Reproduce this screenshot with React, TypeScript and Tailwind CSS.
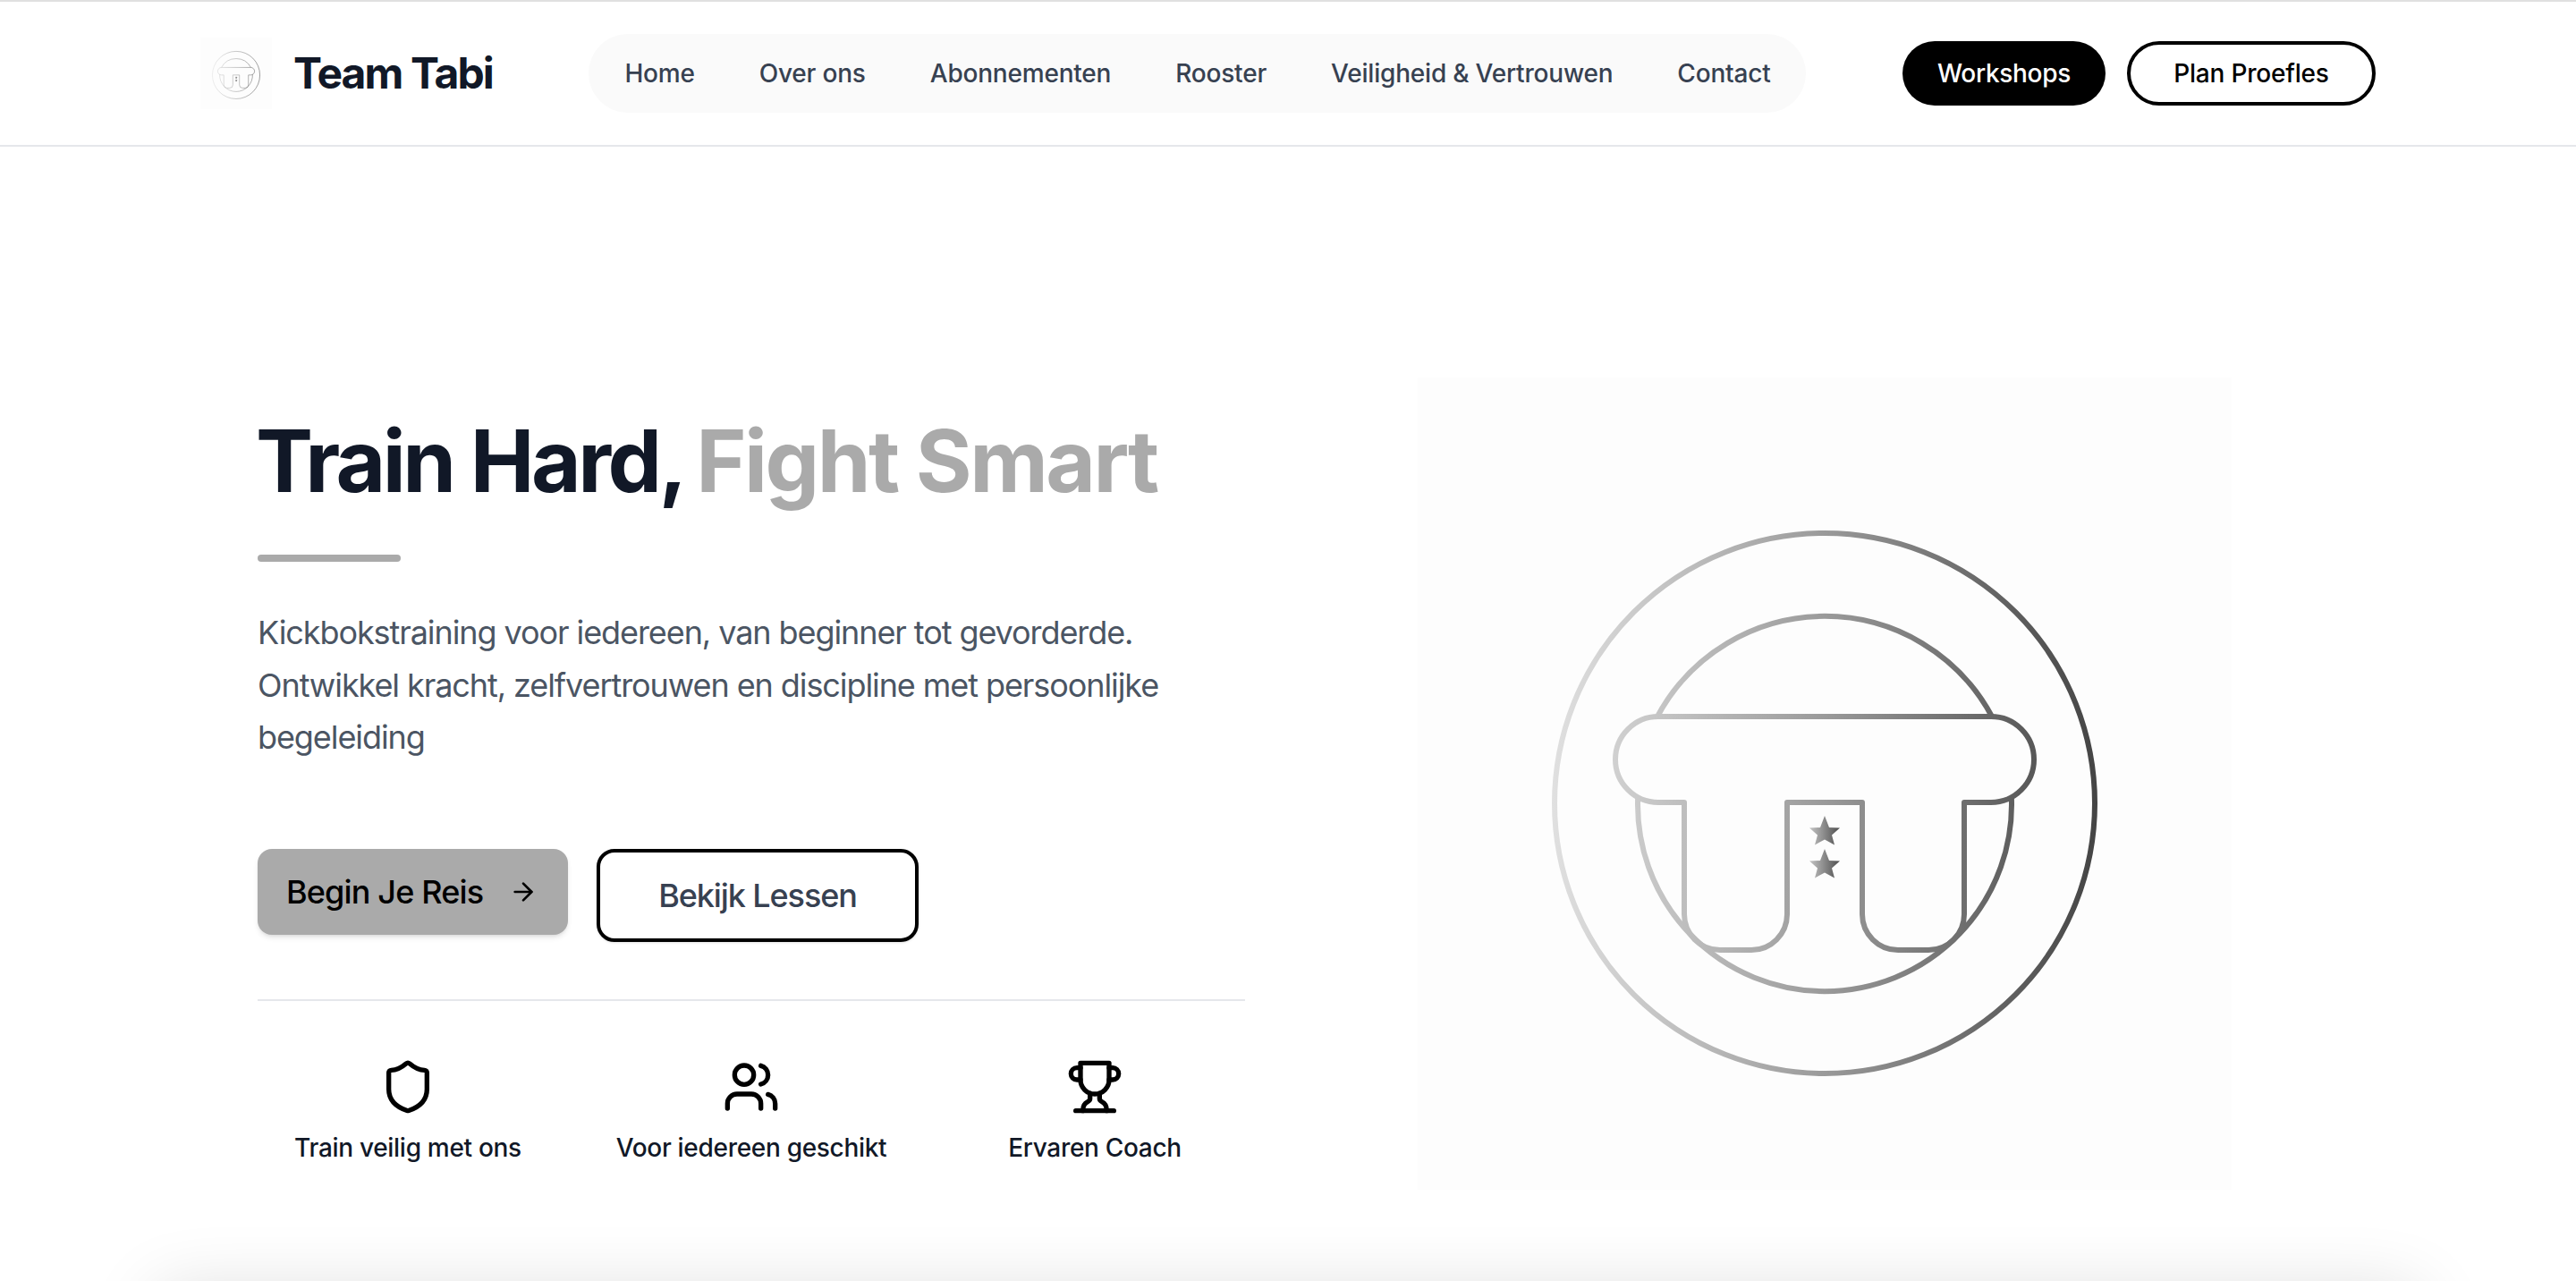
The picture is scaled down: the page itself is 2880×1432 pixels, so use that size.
import { ArrowRight, Shield, Users } from "lucide-react";
import React from "react";

const navLinks = ["Home", "Over ons", "Abonnementen", "Rooster", "Veiligheid & Vertrouwen", "Contact"];

const Logo = ({ id, className }: { id: string; className: string }) => (
  <svg viewBox="0 0 910 908" className={className} fill="none">
    <defs>
      <linearGradient id={id} gradientUnits="userSpaceOnUse" x1="150" y1="0" x2="760" y2="0">
        <stop offset="0" stopColor="#e0e0e0" />
        <stop offset="0.5" stopColor="#9a9a9a" />
        <stop offset="1" stopColor="#444444" />
      </linearGradient>
      <linearGradient id={`${id}-star`} x1="0" y1="0" x2="1" y2="0">
        <stop offset="0" stopColor="#c4c4c4" />
        <stop offset="1" stopColor="#4d4d4d" />
      </linearGradient>
    </defs>
    <g stroke={`url(#${id})`} strokeWidth="6" strokeLinejoin="round">
      <circle cx="455" cy="476" r="302" />
      <path d="M268 379A212 212 0 0 1 642 379" />
      <path d="M246.2 468A209 209 0 1 0 663.8 468" />
      <path d="M269 379H641A48 48 0 0 1 641 475H611V600A40 40 0 0 1 571 640H537A40 40 0 0 1 497 600V475H413V600A40 40 0 0 1 373 640H338A40 40 0 0 1 298 600V475H269A48 48 0 0 1 269 379Z" />
    </g>
    <path
      fill={`url(#${id}-star)`}
      d="M455 490L460 503L472 503.5L463 511.5L466 522.5L455 516.5L444 522.5L447 511.5L438 503.5L450 503Z"
    />
    <path
      fill={`url(#${id}-star)`}
      d="M455 527L460 540L472 540.5L463 548.5L466 559.5L455 553.5L444 559.5L447 548.5L438 540.5L450 540Z"
    />
  </svg>
);

// lucide's Trophy changed its shape, the picture has the older cup
const Trophy = ({ className }: { className?: string }) => (
  <svg
    viewBox="0 0 24 24"
    className={className}
    fill="none"
    stroke="currentColor"
    strokeWidth="2"
    strokeLinecap="round"
    strokeLinejoin="round"
  >
    <path d="M6 9H4.5a2.5 2.5 0 0 1 0-5H6" />
    <path d="M18 9h1.5a2.5 2.5 0 0 0 0-5H18" />
    <path d="M4 22h16" />
    <path d="M10 14.66V17c0 .55-.47.98-.97 1.21C7.85 18.75 7 20.24 7 22" />
    <path d="M14 14.66V17c0 .55.47.98.97 1.21C16.15 18.75 17 20.24 17 22" />
    <path d="M18 2H6v7a6 6 0 0 0 12 0V2Z" />
  </svg>
);

const features = [
  { icon: Shield, label: "Train veilig met ons" },
  { icon: Users, label: "Voor iedereen geschikt" },
  { icon: Trophy, label: "Ervaren Coach" },
];

export default function App() {
  return (
    <div className="h-screen overflow-hidden bg-white font-['Inter',sans-serif]">
      <header className="flex h-[164px] items-center justify-between border-t-2 border-b-2 border-t-[#e0e0e0] border-b-[#e5e7eb] px-[224px]">
        <a className="flex items-center gap-6">
          <Logo id="logo-small" className="size-20 bg-[#fdfdfd]" />
          <span className="text-[48px] font-bold tracking-[-1.9px] text-[#111827]">Team Tabi</span>
        </a>
        <nav className="flex h-[88px] items-center gap-[72px] rounded-full bg-[#fafafa] px-10">
          {navLinks.map((link) => (
            <a key={link} className="text-[28px] font-medium tracking-[-0.2px] text-[#374151]">
              {link}
            </a>
          ))}
        </nav>
        <div className="flex items-center gap-6">
          <button className="h-[72px] w-[227px] rounded-full bg-black text-[28px] font-medium tracking-[-0.3px] text-white">
            Workshops
          </button>
          <button className="h-[72px] w-[278px] rounded-full border-4 border-black text-[28px] font-medium tracking-[-0.2px] text-black">
            Plan Proefles
          </button>
        </div>
      </header>

      <main className="flex items-start justify-between pr-[385px] pl-[288px]">
        <div className="flex w-[1104px] flex-col pt-[291px]">
          <h1 className="-ml-0.5 text-[96px] leading-[120px] font-bold tracking-[-2.5px] text-[#111827]">
            <span className="mr-[-7px] tracking-[-3.5px]">Train Hard,</span>{" "}
            <span className="text-[#aaaaaa]">Fight Smart</span>
          </h1>
          <div className="mt-[45px] h-2 w-40 rounded-full bg-[#aaaaaa]" />
          <p className="mt-[50px] w-[1040px] text-[36px] leading-[58.5px] tracking-[-1.08px] text-[#4b5563]">
            Kickbokstraining voor iedereen, van beginner tot gevorderde. Ontwikkel kracht, zelfvertrouwen en discipline
            met persoonlijke begeleiding
          </p>
          <div className="mt-[95px] flex items-start gap-8">
            <button className="flex h-24 w-[347px] items-center gap-[29px] rounded-2xl bg-[#aaaaaa] pl-8 text-[36px] font-medium tracking-[-0.85px] text-black shadow-md">
              Begin Je Reis
              <ArrowRight className="size-8" strokeWidth={2} />
            </button>
            <button className="h-[104px] w-[360px] rounded-[20px] border-4 border-black text-[36px] font-medium tracking-[-1.1px] text-[#374151] shadow-sm">
              Bekijk Lessen
            </button>
          </div>
          <div className="mt-[64px] grid grid-cols-3 gap-12 border-t-2 border-[#e5e7eb] pt-[64px]">
            {features.map(({ icon: Icon, label }) => (
              <div key={label} className="flex flex-col items-center gap-4">
                <Icon className="size-16 text-black" strokeWidth={2} />
                <span className="text-[28px] leading-10 font-medium tracking-[-0.3px] text-[#111827]">{label}</span>
              </div>
            ))}
          </div>
        </div>
        <div className="mt-[258px] shrink-0">
          <Logo id="logo-large" className="h-[908px] w-[910px] bg-[#fdfdfd]" />
        </div>
      </main>

      <section className="mx-[176px] mt-[114px] h-[200px] bg-white shadow-[0_0_80px_rgba(0,0,0,0.14)]" />
    </div>
  );
}
